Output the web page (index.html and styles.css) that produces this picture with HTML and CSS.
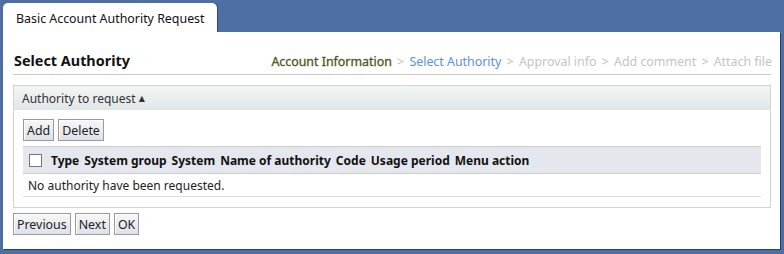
FILE: index.html
```html
<!DOCTYPE html>
<html lang="en">
<head>
    <meta charset="UTF-8">
    <title>Basic Account Authority Request</title>
    <link rel="stylesheet" href="styles.css">
</head>
<body>
    <div class="tabs">
        <div class="tab">Basic Account Authority Request</div>
    </div>
    <div class="panel">
        <div class="title-row">
            <h2>Select Authority</h2>
            <div class="steps">
                <span class="done">Account Information</span>
                <span class="sep">&gt;</span>
                <span class="current">Select Authority</span>
                <span class="sep">&gt;</span>
                <span>Approval info</span>
                <span class="sep">&gt;</span>
                <span>Add comment</span>
                <span class="sep">&gt;</span>
                <span>Attach file</span>
            </div>
        </div>

        <div class="section">
            <div class="section-head">Authority to request <span class="caret">&#9650;</span></div>
            <div class="section-body">
                <div class="toolbar">
                    <button class="btn">Add</button>
                    <button class="btn">Delete</button>
                </div>
                <table class="grid">
                    <thead>
                        <tr>
                            <th><span class="check"></span>Type</th>
                            <th>System group</th>
                            <th>System</th>
                            <th>Name of authority</th>
                            <th>Code</th>
                            <th>Usage period</th>
                            <th class="last">Menu action</th>
                        </tr>
                    </thead>
                    <tbody>
                        <tr><td colspan="7">No authority have been requested.</td></tr>
                    </tbody>
                </table>
            </div>
        </div>

        <div class="actions">
            <button class="btn">Previous</button>
            <button class="btn">Next</button>
            <button class="btn">OK</button>
        </div>
    </div>
</body>
</html>
```

FILE: styles.css
```css
body {
    margin: 0;
    padding: 3px 4px 4px 3px;
    background-color: #4d6fa3;
    font-family: "Noto Sans", "DejaVu Sans", sans-serif;
    font-size: 12px;
    color: #222;
    height: 254px;
    box-sizing: border-box;
}
.tabs {
    display: flex;
    height: 29px;
}
.tab {
    width: 214px;
    background-color: #fff;
    border-radius: 5px 5px 0 0;
    box-shadow: 1px 0 0 #2f4a75;
    padding: 7px 0 0 13px;
    box-sizing: border-box;
    color: #111;
    font-size: 12.4px;
}
.panel {
    background-color: #fff;
    box-shadow: 1px 1px 0 #27406a;
    height: 217px;
    padding: 0 9px 0 10px;
    box-sizing: border-box;
}
.title-row {
    display: flex;
    justify-content: space-between;
    align-items: flex-end;
    height: 43px;
    border-bottom: 1px solid #ccc;
    box-sizing: border-box;
    padding-bottom: 4px;
}
h2 {
    margin: 0 0 0 1px;
    font-size: 14.4px;
    font-weight: bold;
    color: #111;
}
.steps {
    color: #c4c4c4;
    font-size: 12.4px;
    margin-right: -1px;
}
.steps .done {
    color: #4a581a;
    -webkit-text-stroke: 0.3px #4a581a;
}
.steps .current {
    color: #5b8fe8;
}
.steps .sep {
    color: #bbb;
    margin: 0 2px;
}
.section {
    margin-top: 10px;
    border: 1px solid #d3d3d3;
}
.section-head {
    height: 24px;
    padding: 4px 0 0 8px;
    box-sizing: border-box;
    background: linear-gradient(#f3f5f6, #e0e6e8);
    color: #333;
}
.caret {
    font-size: 8px;
    vertical-align: 2px;
}
.section-body {
    padding: 9px 9px 10px 9px;
}
.toolbar {
    display: flex;
    gap: 4px;
    margin-bottom: 5px;
}
.btn {
    font-family: "Noto Sans", "DejaVu Sans", sans-serif;
    font-size: 12.4px;
    color: #222;
    height: 22px;
    padding: 0 3px;
    border: 1px solid #9a9a9a;
    background: linear-gradient(#f6f7f9, #dde1e8);
    box-shadow: inset 1px 1px 0 #fff;
    cursor: pointer;
}
.grid {
    width: 100%;
    border-collapse: collapse;
}
.grid th {
    background-color: #e4e7ee;
    border-top: 1px solid #cdcdcd;
    border-bottom: 1px solid #cdcdcd;
    height: 26px;
    text-align: left;
    padding: 0 3px 0 2px;
    white-space: nowrap;
    width: 1%;
    color: #111;
}
.grid th.last {
    width: auto;
}
.check {
    display: inline-block;
    width: 11px;
    height: 11px;
    border: 1px solid #777;
    background-color: #fff;
    vertical-align: -2px;
    margin: 0 9px 0 4px;
}
.grid td {
    height: 22px;
    border-bottom: 1px solid #ddd;
    padding: 0 0 0 5px;
}
.actions {
    display: flex;
    gap: 4px;
    margin-top: 5px;
}
```
